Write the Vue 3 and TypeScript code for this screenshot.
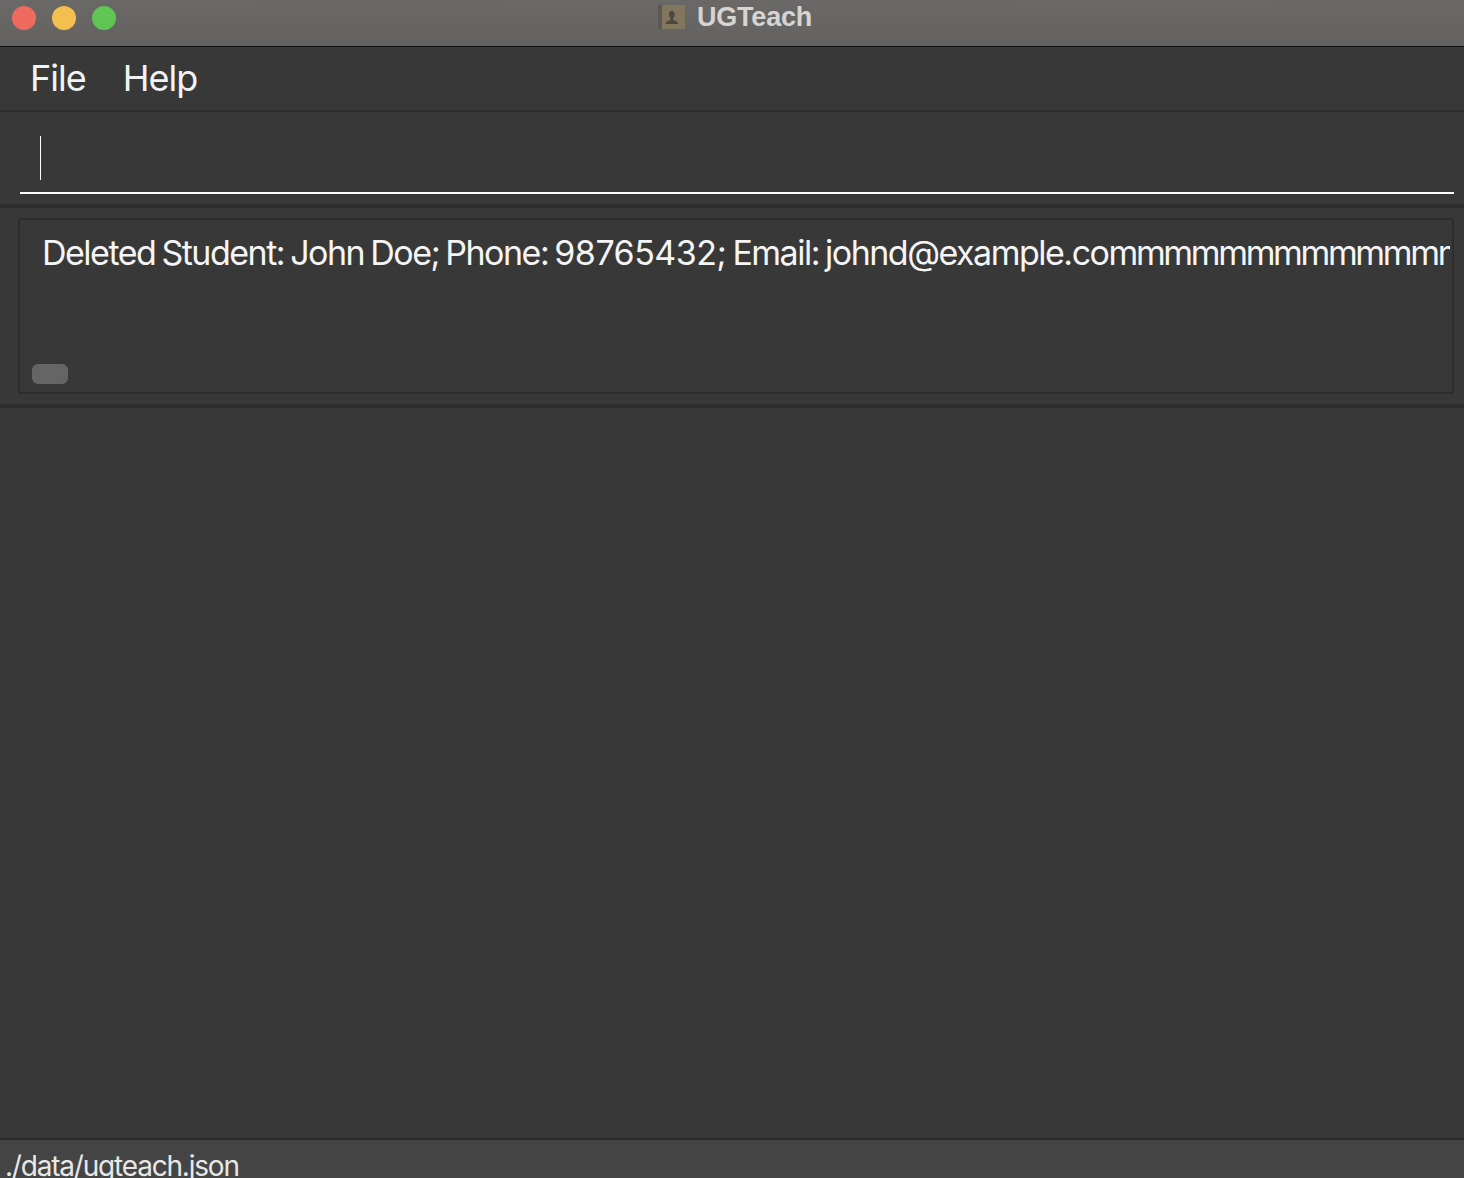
<script setup lang="ts">
const menus: string[] = ['File', 'Help']
const messageStart = 'Deleted Student: John Doe; Phone: '
const messageNumber = '98765432;'
const messageMiddle = ' Email: johnd@example.co'
const messageTail = 'mmmmmmmmmmmmmmmm'
</script>

<template>
  <div class="window">
    <header class="titlebar">
      <div class="lights">
        <span class="light red"></span>
        <span class="light yellow"></span>
        <span class="light green"></span>
      </div>
      <div class="title">
        <svg class="app-icon" width="28" height="26" viewBox="0 0 28 26">
          <rect x="0" y="1" width="5" height="24" fill="#5c5750" />
          <rect x="4" y="1" width="23" height="24" rx="1" fill="#85775f" />
          <path d="M7.500 20c0-3 4-3.500 5-4.300v-1.500c-1.100-.9-1.600-2.300-1.600-3.800 0-2.300 1.300-3.700 2.900-3.700s2.900 1.400 2.900 3.700c0 1.500-.5 2.900-1.600 3.800v1.500c1 .8 5 1.300 5 4.300z" fill="#4a4640" />
        </svg>
        <span class="title-text">UGTeach</span>
      </div>
    </header>
    <nav class="menubar">
      <span v-for="m in menus" :key="m" class="menu">{{ m }}</span>
    </nav>
    <section class="command">
      <div class="field"><span class="caret"></span></div>
    </section>
    <section class="result">
      <div class="result-box">
        <div class="message">{{ messageStart }}<span class="digits">{{ messageNumber }}</span>{{ messageMiddle }}<span class="tail">{{ messageTail }}</span></div>
        <div class="thumb"></div>
      </div>
    </section>
    <main class="content"></main>
    <footer class="status">./data/ugteach.json</footer>
  </div>
</template>

<style>
html, body { margin: 0; background: #383838; overflow: hidden; }
</style>

<style scoped>
.window {
  width: 1464px;
  height: 1178px;
  display: flex;
  flex-direction: column;
  overflow: hidden;
  background: #383838;
  color: #f2f2f2;
  font-family: Inter, "Liberation Sans", sans-serif;
}
.titlebar {
  position: relative;
  flex: none;
  height: 47px;
  box-sizing: border-box;
  display: flex;
  justify-content: center;
  padding-top: 3px;
  background: linear-gradient(#6a6967, #636260);
  border-bottom: 1px solid #0e0e0e;
}
.lights {
  position: absolute;
  left: 12px;
  top: 6px;
  display: flex;
  gap: 16px;
}
.light { width: 24px; height: 24px; border-radius: 50%; }
.red { background: #ee6a5f; }
.yellow { background: #f5bf4f; }
.green { background: #61c554; }
.title {
  display: flex;
  align-items: center;
  gap: 11px;
  height: 28px;
  margin-left: 6px;
}
.app-icon { flex: none; opacity: 0.95; }
.title-text {
  font-size: 27px;
  font-weight: 700;
  color: #d6d5d4;
  letter-spacing: -0.2px;
  line-height: 32px;
  font-family: "Liberation Sans", Arial, sans-serif;
}
.menubar {
  flex: none;
  height: 65px;
  box-sizing: border-box;
  display: flex;
  align-items: center;
  gap: 37px;
  padding-left: 30px;
  padding-bottom: 2px;
  border-bottom: 2px solid #2e2e2e;
}
.menu { font-size: 36px; letter-spacing: -1px; line-height: 40px; }
.command {
  flex: none;
  height: 96px;
  box-sizing: border-box;
  padding: 24px 10px 0 20px;
  border-bottom: 4px solid #2d2d2d;
}
.field {
  height: 58px;
  box-sizing: border-box;
  border-bottom: 2px solid #ffffff;
  padding-left: 20px;
}
.caret { display: block; width: 1px; height: 44px; background: #ffffff; }
.result {
  flex: none;
  height: 200px;
  box-sizing: border-box;
  padding: 10px 10px 0 18px;
  border-bottom: 4px solid #2d2d2d;
}
.result-box {
  position: relative;
  height: 176px;
  box-sizing: border-box;
  border: 2px solid #2e2e2e;
  padding: 13px 2px 0 22px;
}
.message {
  overflow: hidden;
  font-size: 34px;
  line-height: 40px;
  letter-spacing: -1.5px;
  word-spacing: -2px;
  white-space: nowrap;
  color: #f5f5f5;
}
.digits { letter-spacing: -0.5px; }
.tail { letter-spacing: -2.35px; }
.thumb {
  position: absolute;
  left: 12px;
  top: 144px;
  width: 36px;
  height: 20px;
  border-radius: 6px;
  background: #656565;
}
.content { flex: 1; min-height: 0; }
.status {
  flex: none;
  height: 40px;
  box-sizing: border-box;
  border-top: 2px solid #2b2b2b;
  background: #444444;
  padding: 9px 0 0 5px;
  font-size: 28px;
  line-height: 34px;
  letter-spacing: -1.2px;
  color: #e8e8e8;
  white-space: nowrap;
}
</style>
